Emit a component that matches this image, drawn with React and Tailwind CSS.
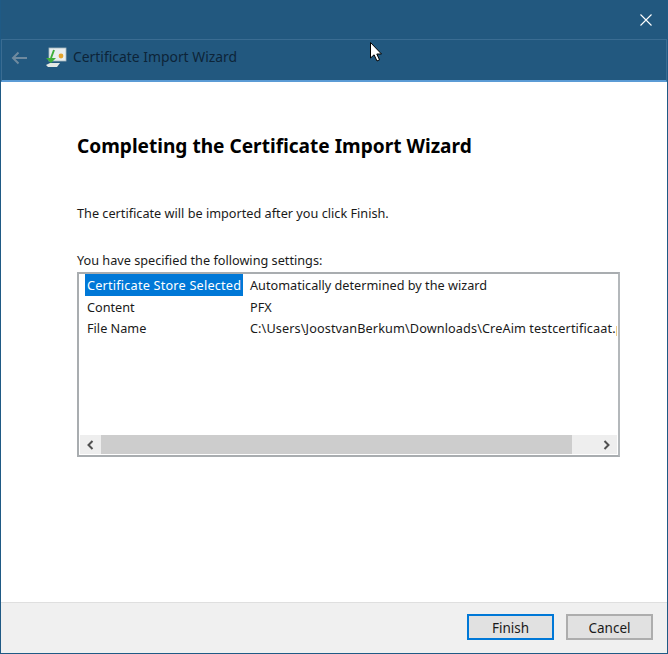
const font = { fontFamily: '"Noto Sans", sans-serif' };

function Row({ name, value, selected, wide }) {
  return (
    <div className="flex h-[21.5px] items-stretch whitespace-nowrap">
      <div className={`ml-[5px] flex w-[158px] shrink-0 items-center pl-[2px] pt-[2px] ${selected ? "bg-[#0078d7] tracking-[0.2px] text-white" : "text-[#1a1a1a]"}`}>
        {name}
      </div>
      <div className={`ml-[7px] flex items-center pt-[2px] text-[#1a1a1a] ${wide ? "tracking-[0.1px]" : ""}`}>{value}</div>
    </div>
  );
}

export default function App() {
  return (
    <div className="relative flex h-[654px] w-[668px] flex-col overflow-hidden border-x border-b border-[#1f5a85] bg-white text-[12.7px]" style={font}>
      {/* Barra de titulo */}
      <div className="flex h-[39px] shrink-0 items-start justify-end bg-[#22587f] pr-[15px] pt-[14px]">
        <svg width="12" height="12" viewBox="0 0 12 12" fill="none" stroke="white" strokeWidth="1.1">
          <path d="M0.5 0.5L11.5 11.5M11.5 0.5L0.5 11.5" />
        </svg>
      </div>

      {/* Navegacion */}
      <div className="flex h-[43px] shrink-0 items-center border-x border-t border-b-2 border-x-[#3a6c92] border-t-[#3a6c92] border-b-[#5b9bd5] bg-[#22587f] pb-[5px]">
        <svg className="ml-[9px]" width="17" height="14" viewBox="0 0 17 14" fill="none" stroke="#6f8a9f" strokeWidth="2">
          <path d="M16 7H2M7.5 1.5L2 7l5.5 5.5" />
        </svg>
        <svg className="ml-[17px]" width="22" height="22" viewBox="0 0 22 22">
          <rect x="4" y="1" width="17" height="13" fill="#e8eef0" stroke="#a9b9bf" strokeWidth="0.8" />
          <circle cx="16" cy="9" r="2.4" fill="#e2a32c" />
          <path d="M9 3l-3 8" stroke="#3fae3a" strokeWidth="2" />
          <path d="M1 11l5 5 5-5z" fill="#3fae3a" />
          <path d="M1 18l4-2h10l-3 4H3z" fill="#e4e8e4" />
        </svg>
        <span className="ml-[6px] text-[13.9px] text-[#0d2438]">Certificate Import Wizard</span>
      </div>

      {/* Contenido */}
      <div className="flex min-h-0 flex-1 flex-col pl-[76px] pr-[48px] text-[#1a1a1a]">
        <h1 className="mt-[49px] text-[19.1px] font-bold leading-[30px] text-black">Completing the Certificate Import Wizard</h1>
        <p className="mt-[42px] leading-[20px]">The certificate will be imported after you click Finish.</p>
        <p className="mt-[27px] leading-[20px]">You have specified the following settings:</p>

        <div className="mt-[2px] flex h-[185px] w-[543px] flex-col overflow-hidden border-2 border-[#a9adb0] border-r-[#b4b8bb] px-px pb-px">
          <div className="min-h-0 flex-1 overflow-hidden">
            <Row name="Certificate Store Selected" value="Automatically determined by the wizard" selected />
            <Row name="Content" value="PFX" />
            <Row name="File Name" value="C:\Users\JoostvanBerkum\Downloads\CreAim testcertificaat.pfx" wide />
          </div>
          <div className="flex h-[19px] shrink-0 items-stretch bg-[#eeeeee]">
            <div className="flex w-[21px] items-center justify-center">
              <svg width="7" height="10" viewBox="0 0 7 10" fill="none" stroke="#505050" strokeWidth="2">
                <path d="M5.5 1L1.5 5l4 4" />
              </svg>
            </div>
            <div className="w-[471px] bg-[#cdcdcd]" />
            <div className="flex-1" />
            <div className="flex w-[21px] items-center justify-center">
              <svg width="7" height="10" viewBox="0 0 7 10" fill="none" stroke="#505050" strokeWidth="2">
                <path d="M1.5 1l4 4-4 4" />
              </svg>
            </div>
          </div>
        </div>
      </div>

      {/* Pie */}
      <div className="flex h-[51px] shrink-0 items-start justify-end gap-[12px] border-t border-[#dfdfdf] bg-[#f0f0f0] pr-[14px] pt-[11px] text-[13.5px] text-[#1a1a1a]">
        <button className="h-[26px] w-[87px] border-2 border-[#0078d7] bg-[#e1e1e1] pt-[2px]">Finish</button>
        <button className="h-[26px] w-[87px] border-2 border-[#adadad] bg-[#e1e1e1] pt-[2px]">Cancel</button>
      </div>

      {/* Puntero */}
      <svg className="absolute left-[369px] top-[42px]" width="12" height="20" viewBox="0 0 12 20">
        <path d="M0.5 0.5V16l3.6-3.2L7 19l2.5-1.2-2.7-5.8H11.5z" fill="white" stroke="black" strokeWidth="1" />
      </svg>
    </div>
  );
}
